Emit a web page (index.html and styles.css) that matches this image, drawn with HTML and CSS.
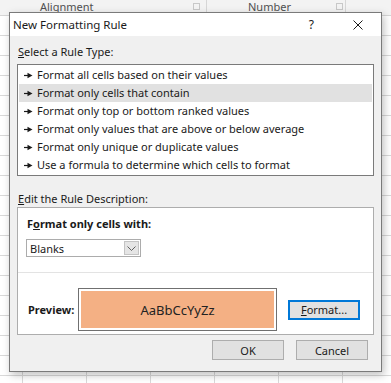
FILE: index.html
```html
<!DOCTYPE html>
<html>
<head>
    <title>New Formatting Rule</title>
    <meta charset="utf-8">
    <link rel="stylesheet" href="styles.css">
</head>
<body>
    <div class="ribbon">
        <span class="group-label label-alignment">Alignment</span>
        <span class="launcher launcher-alignment"></span>
        <span class="group-sep sep-1"></span>
        <span class="group-label label-number">Number</span>
        <span class="launcher launcher-number"></span>
        <span class="group-sep sep-2"></span>
    </div>
    <div class="sheet"></div>

    <div class="dialog">
        <div class="titlebar">
            <span class="title">New Formatting Rule</span>
            <span class="help">?</span>
            <svg class="close" width="10" height="10" viewBox="0 0 10 10">
                <path d="M0.5 0.5 L9.5 9.5 M9.5 0.5 L0.5 9.5" stroke="#1a1a1a" stroke-width="1" fill="none"/>
            </svg>
        </div>

        <div class="body">
            <div class="section-label"><u>S</u>elect a Rule Type:</div>
            <ul class="rule-list">
                <li><svg class="bullet" width="9" height="7" viewBox="0 0 9 7"><path d="M0 3.5 H4" stroke="#1a1a1a" stroke-width="1.2"/><path d="M3.5 0.8 L8.5 3.5 L3.5 6.2 Z" fill="#1a1a1a"/></svg>Format all cells based on their values</li>
                <li class="selected"><svg class="bullet" width="9" height="7" viewBox="0 0 9 7"><path d="M0 3.5 H4" stroke="#1a1a1a" stroke-width="1.2"/><path d="M3.5 0.8 L8.5 3.5 L3.5 6.2 Z" fill="#1a1a1a"/></svg>Format only cells that contain</li>
                <li><svg class="bullet" width="9" height="7" viewBox="0 0 9 7"><path d="M0 3.5 H4" stroke="#1a1a1a" stroke-width="1.2"/><path d="M3.5 0.8 L8.5 3.5 L3.5 6.2 Z" fill="#1a1a1a"/></svg>Format only top or bottom ranked values</li>
                <li><svg class="bullet" width="9" height="7" viewBox="0 0 9 7"><path d="M0 3.5 H4" stroke="#1a1a1a" stroke-width="1.2"/><path d="M3.5 0.8 L8.5 3.5 L3.5 6.2 Z" fill="#1a1a1a"/></svg>Format only values that are above or below average</li>
                <li><svg class="bullet" width="9" height="7" viewBox="0 0 9 7"><path d="M0 3.5 H4" stroke="#1a1a1a" stroke-width="1.2"/><path d="M3.5 0.8 L8.5 3.5 L3.5 6.2 Z" fill="#1a1a1a"/></svg>Format only unique or duplicate values</li>
                <li><svg class="bullet" width="9" height="7" viewBox="0 0 9 7"><path d="M0 3.5 H4" stroke="#1a1a1a" stroke-width="1.2"/><path d="M3.5 0.8 L8.5 3.5 L3.5 6.2 Z" fill="#1a1a1a"/></svg>Use a formula to determine which cells to format</li>
            </ul>

            <div class="section-label edit-label"><u>E</u>dit the Rule Description:</div>
            <div class="description">
                <div class="desc-top">
                    <div class="bold-label">F<u>o</u>rmat only cells with:</div>
                    <div class="dropdown">
                        <span class="dropdown-value">Blanks</span>
                        <span class="dropdown-button">
                            <svg width="9" height="5" viewBox="0 0 9 5"><path d="M0.5 0.5 L4.5 4.5 L8.5 0.5" stroke="#606060" stroke-width="1" fill="none"/></svg>
                        </span>
                    </div>
                </div>
                <div class="desc-bottom">
                    <div class="bold-label preview-label">Preview:</div>
                    <div class="preview-box">
                        <div class="preview-fill">AaBbCcYyZz</div>
                    </div>
                    <button class="btn btn-default"><u>F</u>ormat...</button>
                </div>
            </div>

            <div class="actions">
                <button class="btn">OK</button>
                <button class="btn">Cancel</button>
            </div>
        </div>
    </div>
</body>
</html>
```

FILE: styles.css
```css
html, body {
    margin: 0;
    padding: 0;
    width: 391px;
    height: 383px;
    overflow: hidden;
}

body {
    position: relative;
    font-family: 'Noto Sans', sans-serif;
    font-size: 11px;
    color: #1a1a1a;
    background: #ffffff;
}

/* ribbon strip behind the dialog */
.ribbon {
    position: relative;
    height: 15px;
    background: #f3f3f3;
    border-bottom: 1px solid #d6d6d6;
}

.group-label {
    position: absolute;
    top: 0;
    line-height: 13px;
    color: #505050;
    font-size: 11px;
}

.label-alignment { left: 40px; }
.label-number { left: 248px; }

.launcher {
    position: absolute;
    top: 3px;
    width: 5px;
    height: 5px;
    border: 1px solid #c8c8c8;
}

.launcher-alignment { left: 193px; }
.launcher-number { left: 336px; }

.group-sep {
    position: absolute;
    top: 0;
    width: 1px;
    height: 15px;
    background: #d6d6d6;
}

.sep-1 { left: 206px; }
.sep-2 { left: 345px; }

/* worksheet grid */
.sheet {
    height: 367px;
    background-image:
        repeating-linear-gradient(to bottom, transparent 0, transparent 19px, #d9d9d9 19px, #d9d9d9 20px),
        repeating-linear-gradient(to right, transparent 0, transparent 22px, #d9d9d9 22px, #d9d9d9 23px, transparent 23px, transparent 64px);
    background-position: 0 0, 0 0;
}

/* dialog window */
.dialog {
    position: absolute;
    left: 9px;
    top: 12px;
    width: 371px;
    height: 358px;
    border: 1px solid #7a7a7a;
    background: #f0f0f0;
    box-shadow: 2px 3px 8px rgba(0, 0, 0, 0.25);
    display: flex;
    flex-direction: column;
}

.titlebar {
    height: 23px;
    background: #ffffff;
    display: flex;
    align-items: center;
    padding-left: 3px;
}

.title {
    font-size: 11.5px;
    flex: 1;
}

.help {
    font-size: 12px;
    margin-right: 39px;
}

.close {
    margin-right: 18px;
}

.body {
    padding: 8px 7px 0 7px;
    display: flex;
    flex-direction: column;
}

.section-label {
    height: 16px;
    line-height: 16px;
    padding-left: 1px;
}

.section-label u, .bold-label u, .btn u {
    text-underline-offset: 1px;
}

.rule-list {
    list-style: none;
    margin: 4px 0 0 0;
    padding: 1px;
    border: 1px solid #7a7a7a;
    background: #ffffff;
}

.rule-list li {
    height: 18px;
    line-height: 18px;
    display: flex;
    align-items: center;
    padding-left: 5px;
}

.rule-list li.selected {
    background: #e1e1e1;
}

.bullet {
    margin-right: 4px;
}

.edit-label {
    margin-top: 15px;
}

.description {
    background: #ffffff;
    border: 1px solid #adadad;
}

.desc-top {
    height: 65px;
    border-bottom: 1px solid #e3e3e3;
    padding: 8px 0 0 8px;
    box-sizing: border-box;
}

.bold-label {
    font-weight: bold;
    height: 16px;
    line-height: 16px;
    padding-left: 1px;
}

.dropdown {
    margin-top: 7px;
    width: 110px;
    height: 16px;
    border: 1px solid #acacac;
    display: flex;
    align-items: center;
    justify-content: space-between;
    padding-left: 3px;
}

.dropdown-button {
    width: 15px;
    height: 14px;
    margin-right: 1px;
    background: #e5e5e5;
    border: 1px solid #c4c4c4;
    box-sizing: border-box;
    display: flex;
    align-items: center;
    justify-content: center;
}

.desc-bottom {
    height: 61px;
    display: flex;
    align-items: center;
    padding: 12px 0 0 9px;
    box-sizing: border-box;
}

.preview-label {
    width: 50px;
}

.preview-box {
    width: 193px;
    height: 37px;
    border: 1px solid #707070;
    padding: 2px;
    box-sizing: content-box;
    display: flex;
}

.preview-fill {
    flex: 1;
    background: #f4b084;
    display: flex;
    align-items: center;
    justify-content: center;
    font-size: 13px;
    color: #222222;
}

.btn {
    font-family: 'Noto Sans', sans-serif;
    font-size: 11px;
    color: #1a1a1a;
    width: 72px;
    height: 20px;
    padding: 0;
    background: #e1e1e1;
    border: 1px solid #adadad;
}

.btn-default {
    margin-left: 11px;
    border: 2px solid #0078d7;
}

.actions {
    display: flex;
    justify-content: flex-end;
    gap: 12px;
    margin-top: 5px;
    padding-right: 6px;
}
```
